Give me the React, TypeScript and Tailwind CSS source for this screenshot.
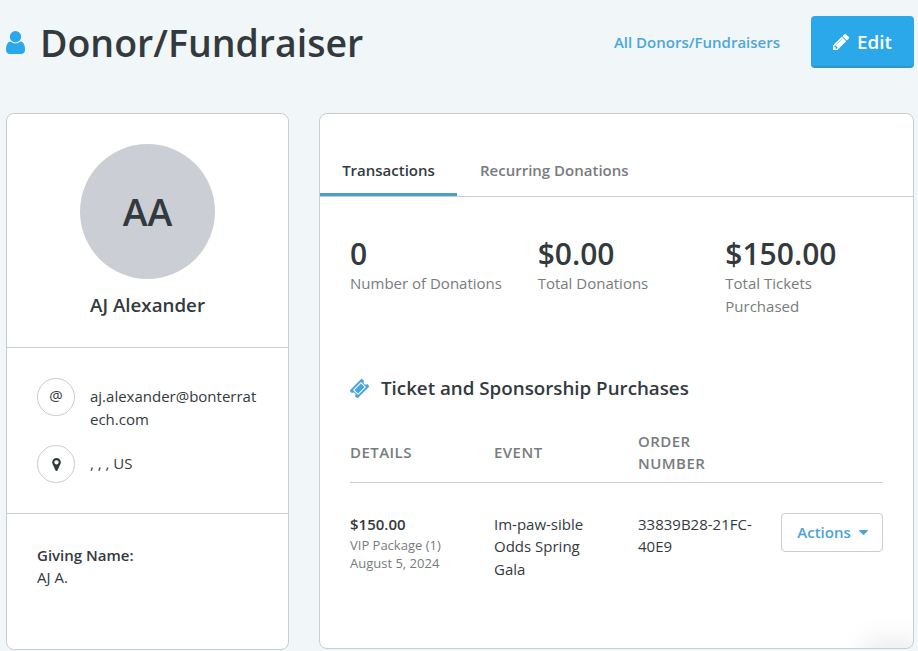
import { ReactNode } from "react";
import clsx from "clsx";

const USER =
  "M1536 1399q0 109-62.5 187t-150.5 78h-854q-88 0-150.5-78t-62.5-187q0-85 8.5-160.5t31.5-152 58.5-131 94-89 134.5-34.5q131 128 313 128t313-128q76 0 134.5 34.5t94 89 58.5 131 31.5 152 8.5 160.5zm-256-887q0 159-112.5 271.5t-271.5 112.5-271.5-112.5-112.5-271.5 112.5-271.5 271.5-112.5 271.5 112.5 112.5 271.5z";
const PENCIL =
  "M491 1536l91-91-235-235-91 91v107h128v128h107zm523-928q0-22-22-22-10 0-17 7l-542 542q-7 7-7 17 0 22 22 22 10 0 17-7l542-542q7-7 7-17zm-54-192l416 416-832 832h-416v-416zm683 96q0 53-37 90l-166 166-416-416 166-165q36-38 90-38 53 0 91 38l235 234q37 39 37 91z";
const TICKET =
  "M1024 452l316 316-572 572-316-316zm-211 979l618-618q19-19 19-45t-19-45l-362-362q-18-18-45-18t-45 18l-618 618q-19 19-19 45t19 45l362 362q18 18 45 18t45-18zm889-637l-907 908q-37 37-90.5 37t-90.5-37l-126-126q56-56 56-136t-56-136-136-56-136 56l-125-126q-37-37-37-90.5t37-90.5l907-906q37-37 90.5-37t90.5 37l125 125q-56 56-56 136t56 136 136 56 136-56l126 125q37 37 37 90.5t-37 90.5z";
const MARKER =
  "M1152 640q0-106-75-181t-181-75-181 75-75 181 75 181 181 75 181-75 75-181zm256 0q0 109-33 179l-364 774q-16 33-47.5 52t-67.5 19-67.5-19-46.5-52l-365-774q-33-70-33-179 0-212 150-362t362-150 362 150 150 362z";
const CARET =
  "M1408 704q0 26-19 45l-448 448q-19 19-45 19t-45-19l-448-448q-19-19-19-45t19-45 45-19h896q26 0 45 19t19 45z";

const Icon = ({ path, viewBox, className }: { path: string; viewBox: string; className: string }) => (
  <svg viewBox={viewBox} className={className} fill="currentColor" aria-hidden="true">
    <path d={path} />
  </svg>
);

const stats = [
  { value: "0", label: "Number of Donations" },
  { value: "$0.00", label: "Total Donations" },
  { value: "$150.00", label: "Total Tickets Purchased" },
];

const tabs = ["Transactions", "Recurring Donations"];

const ContactRow = ({ icon, children }: { icon: ReactNode; children: ReactNode }) => (
  <div className="flex items-start">
    <div className="flex h-[38px] w-[38px] shrink-0 items-center justify-center rounded-full border border-[#c9ccd1]">
      {icon}
    </div>
    <div className="ml-[15px] w-[168px] pt-[7px] break-all">{children}</div>
  </div>
);

const Header = () => (
  <header className="flex h-[84px] items-center pr-1 pl-1.5">
    <Icon path={USER} viewBox="256 128 1280 1536" className="mt-px h-[23px] w-[19px] text-[#2ba8e9]" />
    <h1 className="ml-[15px] pt-px text-[37.5px] leading-[54px] font-semibold text-[#333a3e]">
      Donor/Fundraiser
    </h1>
    <a href="#" className="mr-px ml-auto text-[15px] font-semibold text-[#4ba8d6]">
      All Donors/Fundraisers
    </a>
    <button className="ml-[30px] flex h-[52px] w-[103px] items-center justify-center rounded-[4px] border-b-2 border-[#3093cb] bg-[#2ba8e9] pt-0.5 text-[18.75px] font-semibold text-white">
      <Icon path={PENCIL} viewBox="128 149 1515 1515" className="mr-2 size-[16px]" />
      Edit
    </button>
  </header>
);

const Profile = () => (
  <aside className="h-[537px] w-[283px] shrink-0 rounded-lg border border-[#c9ccd1] bg-white">
    <div className="flex h-[234px] flex-col items-center border-b border-[#c9ccd1] pt-[30px]">
      <div className="flex size-[135px] items-center justify-center rounded-full bg-[#cbced5] pt-0.5 text-[37.5px] font-semibold">
        AA
      </div>
      <div className="mt-3 text-[18.75px] leading-7 font-semibold">AJ Alexander</div>
    </div>
    <div className="flex h-[166px] flex-col gap-[15px] border-b border-[#c9ccd1] px-[30px] pt-[30px]">
      <ContactRow icon={<span className="-mt-1 text-[15px] leading-none">@</span>}>
        aj.alexander@bonterratech.com
      </ContactRow>
      <ContactRow icon={<Icon path={MARKER} viewBox="384 128 1024 1536" className="h-[13px] w-[9px]" />}>
        , , , US
      </ContactRow>
    </div>
    <div className="px-[30px] pt-[30px]">
      <div className="leading-[22px] font-semibold">Giving Name:</div>
      <div>AJ A.</div>
    </div>
  </aside>
);

const Transactions = () => (
  <main className="relative h-[536px] w-[595px] shrink-0 overflow-hidden rounded-lg border border-[#c9ccd1] bg-white">
    <nav className="flex h-[83px] items-end border-b border-[#c9ccd1]">
      {tabs.map((tab, i) => (
        <button
          key={tab}
          className={clsx(
            "h-[38px] rounded-t-[2px] border-b-3 pb-[10px] font-semibold",
            i === 0 ? "w-[137px] border-[#4a9fca]" : "border-transparent px-[23px] text-[#787c7e]"
          )}
        >
          {tab}
        </button>
      ))}
    </nav>

    <section className="flex px-[30px] pt-[38px]">
      {stats.map((stat) => (
        <div key={stat.label} className="w-[187.67px] shrink-0 pr-[30px] last:w-[157px]">
          <div className="text-[30px] leading-[37px] font-semibold">{stat.value}</div>
          <div className="-mr-4 text-[#787c7e]">{stat.label}</div>
        </div>
      ))}
    </section>

    <section className="px-[30px] pt-[57px]">
      <h2 className="flex items-center text-[18.75px] leading-7 font-semibold">
        <Icon path={TICKET} viewBox="53 53 1686 1686" className="mr-3 size-[19px] text-[#4aa5dc]" />
        Ticket and Sponsorship Purchases
      </h2>
      <table className="mt-[27px] w-[533px] table-fixed text-left">
        <colgroup>
          <col className="w-[144px]" />
          <col className="w-[144px]" />
          <col className="w-[143px]" />
          <col />
        </colgroup>
        <thead>
          <tr className="h-[53px] border-b border-[#c9ccd1] leading-[22px] text-[#787c7e]">
            <th className="pb-[7px] font-semibold tracking-[0.45px]">DETAILS</th>
            <th className="pb-[7px] font-semibold tracking-[0.45px]">EVENT</th>
            <th className="pr-[50px] pb-[7px] font-semibold tracking-[0.45px]">ORDER NUMBER</th>
            <th />
          </tr>
        </thead>
        <tbody>
          <tr className="align-top">
            <td className="pt-[30px]">
              <div className="mb-px font-semibold">$150.00</div>
              <div className="text-[13px] leading-[18px] text-[#787c7e]">VIP Package (1)</div>
              <div className="text-[13px] leading-[18px] text-[#787c7e]">August 5, 2024</div>
            </td>
            <td className="pt-[30.4px] pr-[40px]">Im-paw-sible Odds Spring Gala</td>
            <td className="pt-[30.4px] pr-[20px]">33839B28-21FC-40E9</td>
            <td className="pt-[30px]">
              <button className="flex h-[39px] w-[102px] items-center justify-center rounded-[4px] border border-[#c9ccd1] pt-px pl-px font-semibold text-[#4ba3d6]">
                Actions
                <Icon path={CARET} viewBox="384 640 1024 576" className="ml-2 h-[5px] w-[9px]" />
              </button>
            </td>
          </tr>
        </tbody>
      </table>
    </section>
    {/* soft shadow of the help widget in the corner */}
    <div className="absolute -right-3 -bottom-6 h-8 w-16 rounded-full bg-black/8 blur-md" />
  </main>
);

const App = () => {
  return (
    <div className="h-[651px] w-[918px] overflow-hidden bg-[#f1f6f8] font-['Open_Sans',sans-serif] text-[15px] leading-[22.5px] text-[#333a3e]">
      <Header />
      <div className="mt-[29px] flex gap-[30px] pl-1.5">
        <Profile />
        <Transactions />
      </div>
    </div>
  );
};

export default App;
